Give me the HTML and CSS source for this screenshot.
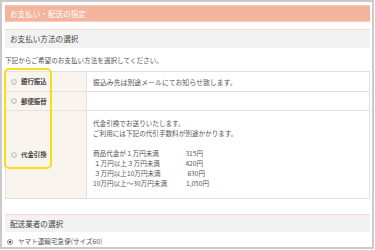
FILE: index.html
```html
<!DOCTYPE html>
<html lang="ja">
<head>
<meta charset="utf-8">
<link rel="stylesheet" href="styles.css">
</head>
<body>
<div class="frame">
  <div class="title-bar">お支払い・配送の指定</div>
  <div class="section-bar">お支払い方法の選択</div>
  <p class="desc">下記からご希望のお支払い方法を選択してください。</p>
  <div class="pay-wrap">
    <table class="pay-table">
      <tr class="row-1">
        <th><span class="radio"></span>銀行振込</th>
        <td>振込み先は別途メールにてお知らせ致します。</td>
      </tr>
      <tr class="row-2">
        <th><span class="radio"></span>郵便振替</th>
        <td></td>
      </tr>
      <tr class="row-3">
        <th><span class="radio"></span>代金引換</th>
        <td>
          <div class="line">代金引換でお送りいたします。</div>
          <div class="line">ご利用には下記の代引手数料が別途かかります。</div>
          <div class="line blank"></div>
          <div class="fees">
            <span>商品代金が１万円未満</span><span class="amt a1">315円</span>
            <span class="ind">１万円以上３万円未満</span><span class="amt a2">420円</span>
            <span class="ind">３万円以上10万円未満</span><span class="amt a3">630円</span>
            <span>10万円以上～30万円未満</span><span class="amt a4">1,050円</span>
          </div>
        </td>
      </tr>
    </table>
    <div class="highlight"></div>
  </div>
  <div class="section-bar second">配送業者の選択</div>
  <div class="carrier"><span class="radio checked"></span>ヤマト運輸宅急便(サイズ60)</div>
</div>
</body>
</html>
```
FILE: styles.css
```css
html, body {
  margin: 0;
  padding: 0;
  background: #fff;
}
body {
  font-family: "Noto Sans CJK JP", "Noto Sans", sans-serif;
  color: #555;
}
.frame {
  box-sizing: border-box;
  width: 374px;
  height: 249px;
  border: 2px solid #cacaca;
  padding: 3px 2px 0 3px;
  overflow: hidden;
}
.title-bar {
  height: 17px;
  box-sizing: border-box;
  background: #f2b49d;
  border-top: 1px solid #f5c6b3;
  border-bottom: 1px solid #f6cdbd;
  color: #fff;
  font-size: 7.6px;
  line-height: 15px;
  padding-left: 5px;
}
.section-bar {
  margin-top: 7px;
  height: 19px;
  box-sizing: border-box;
  background: #f2f2f2;
  border-top: 1px solid #fad8cb;
  font-size: 7.6px;
  line-height: 18px;
  padding-left: 5px;
  color: #444;
}
.section-bar.second {
  margin-top: 15px;
  height: 18px;
  line-height: 17px;
}
.desc {
  margin: 7px 0 0 0;
  font-size: 6.6px;
  line-height: 10px;
  color: #555;
}
.pay-wrap {
  position: relative;
  margin-top: 6px;
}
.pay-table {
  width: 365px;
  border-collapse: collapse;
  font-size: 6.9px;
}
.pay-table th, .pay-table td {
  border: 1px solid #e1e1e1;
  vertical-align: middle;
}
.pay-table th {
  width: 81px;
  box-sizing: border-box;
  background: #f9f4ed;
  text-align: left;
  font-weight: bold;
  color: #444;
  font-size: 6.4px;
  padding: 0 0 0 5px;
  white-space: nowrap;
}
.pay-table td {
  padding: 0 0 0 6px;
  color: #555;
}
.row-1 { height: 20px; }
.row-2 { height: 19px; }
.pay-table .row-3 td {
  padding-top: 7px;
  padding-bottom: 10px;
  font-size: 6.6px;
}
.line {
  line-height: 10px;
  height: 10px;
}
.fees {
  display: grid;
  grid-template-columns: 88px 24px;
  line-height: 10px;
}
.fees .ind { padding-left: 1px; }
.amt { text-align: right; }
.a1, .a2 { padding-right: 2px; }
.a4 { margin-right: -4px; }
.radio {
  display: inline-block;
  box-sizing: border-box;
  width: 6px;
  height: 6px;
  border-radius: 50%;
  border: 1px solid #c8c8c8;
  background: radial-gradient(circle at 50% 40%, #f4f4f4 0 0.8px, #d8d8d8 2px);
  margin-right: 4px;
  vertical-align: -0.5px;
}
.radio.checked {
  width: 6px;
  height: 6px;
  border: 1px solid #999;
  background: radial-gradient(circle, #555 0 1.3px, #fff 1.6px);
  margin-right: 5px;
}
.highlight {
  position: absolute;
  left: -1px;
  top: -3px;
  width: 48px;
  height: 101px;
  box-sizing: border-box;
  border: 2px solid #f6df1a;
  border-radius: 5px;
}
.carrier {
  margin-top: 4px;
  padding-left: 2px;
  font-size: 6.6px;
  line-height: 10px;
  color: #555;
}
```
